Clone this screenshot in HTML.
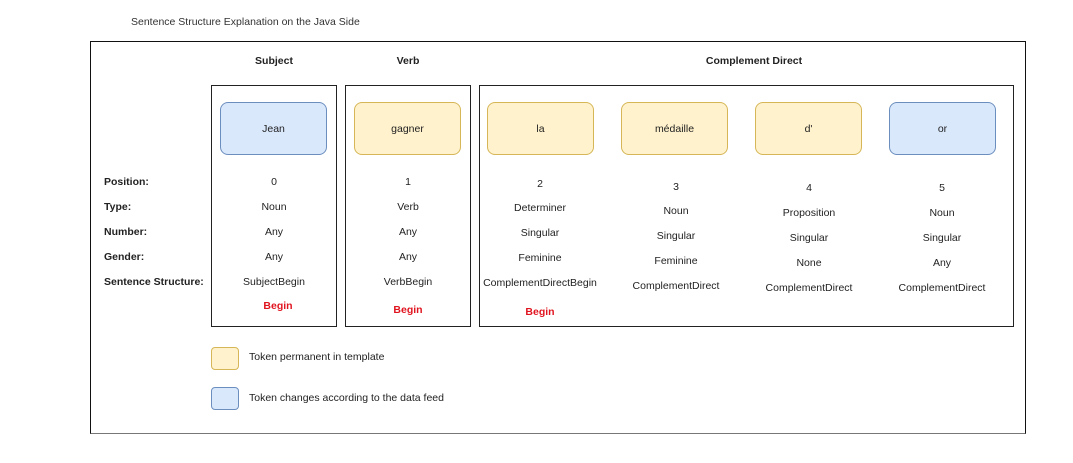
<!DOCTYPE html>
<html><head><meta charset="utf-8"><style>
body{margin:0;width:1073px;height:463px;background:#fff;position:relative;overflow:hidden;font-family:"Liberation Sans",Arial,sans-serif;font-size:10.5px;color:#222}
div{position:absolute;box-sizing:border-box}
.t{white-space:nowrap;transform:translate(-50%,-50%)}
.l{white-space:nowrap;transform:translateY(-50%)}
.b{font-weight:bold}
.r{color:#e0141e;font-weight:bold}
.box{border:1px solid #222}
.tok{width:107px;height:53px;border-radius:8px;display:flex;align-items:center;justify-content:center;top:102px}
.y{background:#fff2cc;border:1px solid #d6b656}
.bl{background:#dae8fc;border:1px solid #6c8ebf}
</style></head><body>
<div class="l" style="left:131px;top:22px;color:#333">Sentence Structure Explanation on the Java Side</div>
<div style="left:90px;top:41px;width:936px;height:393px;border:1px solid #111;border-bottom-color:#777"></div>
<div class="t b" style="left:274px;top:61px">Subject</div>
<div class="t b" style="left:408px;top:61px">Verb</div>
<div class="t b" style="left:754px;top:61px">Complement Direct</div>
<div class="box" style="left:211px;top:85px;width:126px;height:242px"></div>
<div class="box" style="left:345px;top:85px;width:126px;height:242px"></div>
<div class="box" style="left:479px;top:85px;width:535px;height:242px"></div>
<div class="tok bl" style="left:220px">Jean</div>
<div class="tok y" style="left:354px">gagner</div>
<div class="tok y" style="left:487px">la</div>
<div class="tok y" style="left:621px">médaille</div>
<div class="tok y" style="left:755px">d'</div>
<div class="tok bl" style="left:889px">or</div>
<div class="l b" style="left:104px;top:182px">Position:</div>
<div class="l b" style="left:104px;top:207px">Type:</div>
<div class="l b" style="left:104px;top:232px">Number:</div>
<div class="l b" style="left:104px;top:257px">Gender:</div>
<div class="l b" style="left:104px;top:282px">Sentence Structure:</div>

<div class="t" style="left:274px;top:182px">0</div>
<div class="t" style="left:274px;top:207px">Noun</div>
<div class="t" style="left:274px;top:232px">Any</div>
<div class="t" style="left:274px;top:257px">Any</div>
<div class="t" style="left:274px;top:282px">SubjectBegin</div>
<div class="t r" style="left:278px;top:306px">Begin</div>

<div class="t" style="left:408px;top:182px">1</div>
<div class="t" style="left:408px;top:207px">Verb</div>
<div class="t" style="left:408px;top:232px">Any</div>
<div class="t" style="left:408px;top:257px">Any</div>
<div class="t" style="left:408px;top:282px">VerbBegin</div>
<div class="t r" style="left:408px;top:310px">Begin</div>

<div class="t" style="left:540px;top:184px">2</div>
<div class="t" style="left:540px;top:208px">Determiner</div>
<div class="t" style="left:540px;top:233px">Singular</div>
<div class="t" style="left:540px;top:258px">Feminine</div>
<div class="t" style="left:540px;top:283px">ComplementDirectBegin</div>
<div class="t r" style="left:540px;top:312px">Begin</div>

<div class="t" style="left:676px;top:187px">3</div>
<div class="t" style="left:676px;top:211px">Noun</div>
<div class="t" style="left:676px;top:236px">Singular</div>
<div class="t" style="left:676px;top:261px">Feminine</div>
<div class="t" style="left:676px;top:286px">ComplementDirect</div>

<div class="t" style="left:809px;top:188px">4</div>
<div class="t" style="left:809px;top:213px">Proposition</div>
<div class="t" style="left:809px;top:238px">Singular</div>
<div class="t" style="left:809px;top:263px">None</div>
<div class="t" style="left:809px;top:288px">ComplementDirect</div>

<div class="t" style="left:942px;top:188px">5</div>
<div class="t" style="left:942px;top:213px">Noun</div>
<div class="t" style="left:942px;top:238px">Singular</div>
<div class="t" style="left:942px;top:263px">Any</div>
<div class="t" style="left:942px;top:288px">ComplementDirect</div>

<div class="y" style="left:211px;top:347px;width:28px;height:23px;border-radius:4px"></div>
<div class="l" style="left:249px;top:357px">Token permanent in template</div>
<div class="bl" style="left:211px;top:387px;width:28px;height:23px;border-radius:4px"></div>
<div class="l" style="left:249px;top:398px">Token changes according to the data feed</div>
</body></html>
